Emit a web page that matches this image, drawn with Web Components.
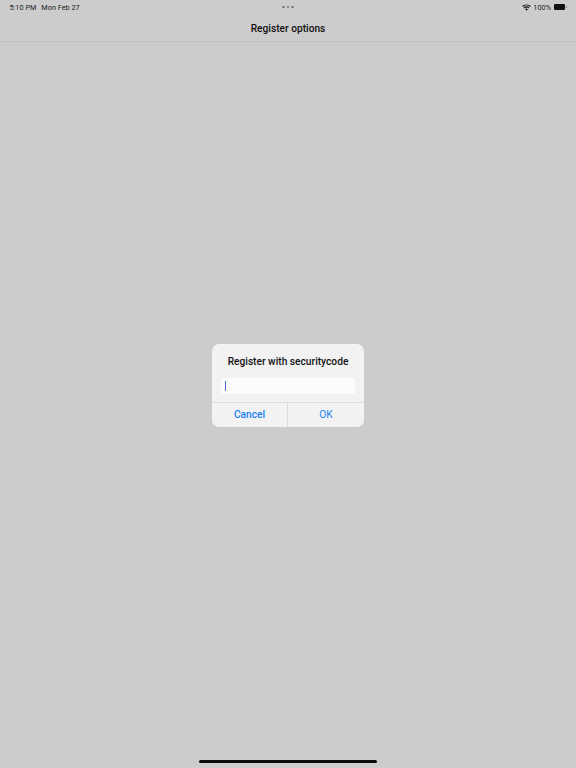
<!DOCTYPE html>
<html>
<head>
<meta charset="utf-8">
<style>
    html, body { margin: 0; height: 100%; background: #cccccc; }
    body { font-family: Roboto, "Liberation Sans", sans-serif; }
</style>
</head>
<body>
<app-screen>
    <status-bar slot="top"></status-bar>
    <nav-bar slot="top">Register options</nav-bar>
    <alert-dialog heading="Register with securitycode"></alert-dialog>
    <home-indicator slot="bottom"></home-indicator>
</app-screen>

<script>
    class AppScreen extends HTMLElement {
        constructor() {
            super();
            this.attachShadow({ mode: 'open' });
            this.shadowRoot.innerHTML = `
                <style>
                    :host { display: flex; flex-direction: column; width: 576px; height: 768px; overflow: hidden; background: #cccccc; }
                    main { flex: 1; display: flex; align-items: flex-start; justify-content: center; padding-top: 302px; }
                </style>
                <slot name="top"></slot>
                <main><slot></slot></main>
                <slot name="bottom"></slot>`;
        }
    }

    class StatusBar extends HTMLElement {
        constructor() {
            super();
            this.attachShadow({ mode: 'open' });
            this.shadowRoot.innerHTML = `
                <style>
                    :host { display: grid; grid-template-columns: 1fr auto 1fr; align-items: center; height: 14px; padding: 0 9.5px 0 9.5px; color: #1c1c1c; font-size: 7.3px; }
                    .left { display: flex; gap: 5px; }
                    .dots { display: flex; gap: 2px; }
                    .dots i { width: 2.4px; height: 2.4px; border-radius: 50%; background: #7d7d7d; }
                    .right { display: flex; justify-content: flex-end; align-items: center; gap: 2.5px; }
                    .battery { display: flex; align-items: center; gap: .5px; }
                    .battery b { width: 11.5px; height: 6px; border-radius: 1.2px; background: #111; }
                    .battery u { width: 1px; height: 2.5px; background: #777; border-radius: 0 1px 1px 0; }
                </style>
                <div class="left"><span>5:10 PM</span><span>Mon Feb 27</span></div>
                <div class="dots"><i></i><i></i><i></i></div>
                <div class="right">
                    <svg width="9" height="7" viewBox="0 0 18 14" fill="none" stroke="#111" stroke-width="2.2">
                        <path d="M1.2 5 A11.5 11.5 0 0 1 16.8 5"/>
                        <path d="M4.2 8 A7.2 7.2 0 0 1 13.8 8"/>
                        <path d="M9 13.5 L6.3 10.6 A3.8 3.8 0 0 1 11.7 10.6 Z" fill="#111" stroke="none"/>
                    </svg>
                    <span>100%</span>
                    <div class="battery"><b></b><u></u></div>
                </div>`;
        }
    }

    class NavBar extends HTMLElement {
        constructor() {
            super();
            this.attachShadow({ mode: 'open' });
            this.shadowRoot.innerHTML = `
                <style>
                    :host { display: flex; align-items: center; justify-content: center; height: 26px; padding-top: 1px; border-bottom: 1px solid #c0c0c0; color: #111; font-size: 10.2px; font-weight: 500; }
                </style>
                <slot></slot>`;
        }
    }

    class AlertDialog extends HTMLElement {
        constructor() {
            super();
            this.attachShadow({ mode: 'open' });
            this.shadowRoot.innerHTML = `
                <style>
                    :host { display: block; width: 152px; height: 83px; border-radius: 7px; overflow: hidden; background: #f2f2f2; }
                    h2 { margin: 0; height: 34px; display: flex; align-items: center; justify-content: center; font-size: 10.2px; font-weight: 500; color: #111; }
                    .field { display: flex; align-items: center; height: 16px; margin: 0 9px; padding-left: 4px; border-radius: 3px; background: #fcfcfc; }
                    .caret { width: 1.2px; height: 10px; background: #4a6ad8; }
                    .buttons { display: grid; grid-template-columns: 76px 76px; height: 25px; margin-top: 8px; border-top: 1px solid #dddddd; box-sizing: border-box; }
                    button { all: unset; display: flex; align-items: center; justify-content: center; padding-bottom: 1px; font: inherit; font-size: 10.2px; color: #1a80f0; }
                    .cancel { font-weight: 500; border-right: 1px solid #dddddd; }
                </style>
                <h2></h2>
                <div class="field"><span class="caret"></span></div>
                <div class="buttons">
                    <button class="cancel">Cancel</button>
                    <button>OK</button>
                </div>`;
            this.shadowRoot.querySelector('h2').textContent = this.getAttribute('heading');
        }
    }

    class HomeIndicator extends HTMLElement {
        constructor() {
            super();
            this.attachShadow({ mode: 'open' });
            this.shadowRoot.innerHTML = `
                <style>
                    :host { display: flex; justify-content: center; height: 8px; }
                    div { width: 178px; height: 3px; border-radius: 2px; background: #0a0a0a; }
                </style>
                <div></div>`;
        }
    }

    customElements.define('app-screen', AppScreen);
    customElements.define('status-bar', StatusBar);
    customElements.define('nav-bar', NavBar);
    customElements.define('alert-dialog', AlertDialog);
    customElements.define('home-indicator', HomeIndicator);
</script>
</body>
</html>
